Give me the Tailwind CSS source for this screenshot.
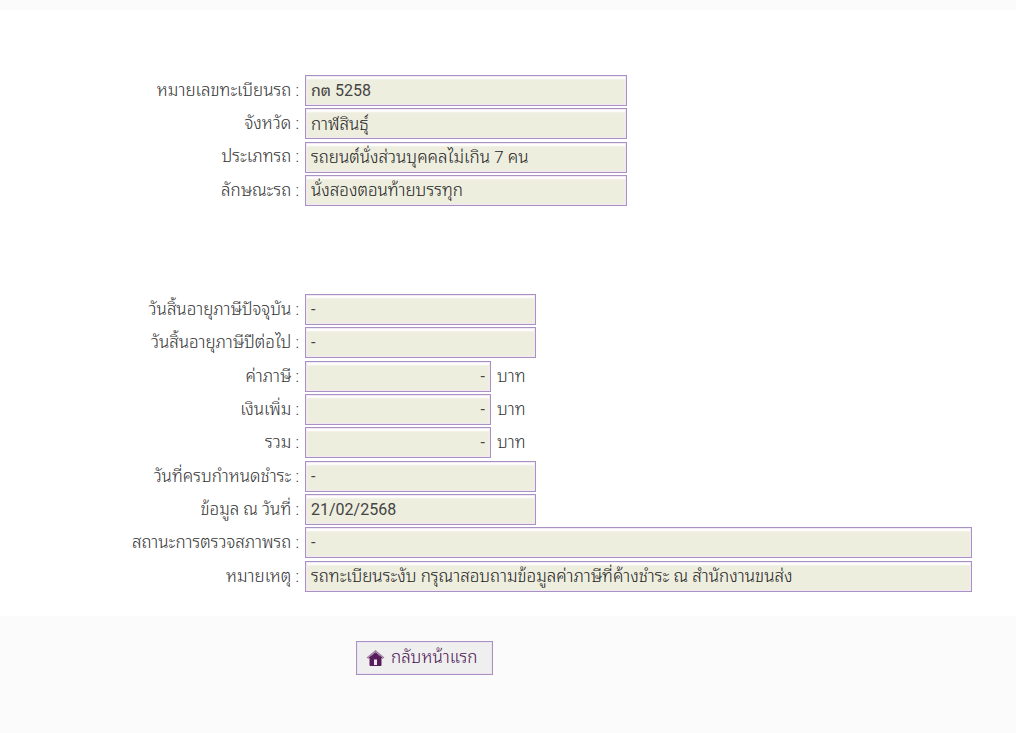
<!DOCTYPE html>
<html lang="th">
<head>
<meta charset="utf-8">
<meta name="viewport" content="width=device-width, initial-scale=1">
<title>ข้อมูลภาษีรถ</title>
<script src="https://cdn.jsdelivr.net/npm/@tailwindcss/browser@4"></script>
</head>
<body class="min-h-screen bg-[#fbfbfb] font-['Roboto','Noto_Sans_Thai_Looped','Noto_Sans',sans-serif] text-[17px] font-[350] text-[#333]">
<main class="pt-[10px]">
<form>
<div class="bg-white pt-[64px] pr-11 pb-[23px]">
  <section class="grid min-h-[133px] auto-rows-fr">
    <div class="flex items-center"><label for="plate" class="w-[305px] shrink-0 pr-[6px] text-right">หมายเลขทะเบียนรถ :</label><input id="plate" readonly value="กต 5258" class="h-[31px] w-[322px] border border-[#a991c4] bg-[#eeeedf] px-[5px] pb-[3px] text-base font-normal text-[#444] shadow-[inset_0_0_0_1px_#f2e9f2,inset_0_3px_2px_#fff]"></div>
    <div class="flex items-center"><label for="province" class="w-[305px] shrink-0 pr-[6px] text-right">จังหวัด :</label><input id="province" readonly value="กาฬสินธุ์" class="h-[31px] w-[322px] border border-[#a991c4] bg-[#eeeedf] px-[5px] pb-[3px] text-[#222] shadow-[inset_0_0_0_1px_#f2e9f2,inset_0_3px_2px_#fff]"></div>
    <div class="flex items-center"><label for="type" class="w-[305px] shrink-0 pr-[6px] text-right">ประเภทรถ :</label><input id="type" readonly value="รถยนต์นั่งส่วนบุคคลไม่เกิน 7 คน" class="h-[31px] w-[322px] border border-[#a991c4] bg-[#eeeedf] px-[5px] pb-[3px] text-[#222] shadow-[inset_0_0_0_1px_#f2e9f2,inset_0_3px_2px_#fff]"></div>
    <div class="flex items-center"><label for="body" class="w-[305px] shrink-0 pr-[6px] text-right">ลักษณะรถ :</label><input id="body" readonly value="นั่งสองตอนท้ายบรรทุก" class="h-[31px] w-[322px] border border-[#a991c4] bg-[#eeeedf] px-[5px] pb-[3px] text-[#222] shadow-[inset_0_0_0_1px_#f2e9f2,inset_0_3px_2px_#fff]"></div>
  </section>
  <section class="mt-[86px] grid min-h-[300px] auto-rows-fr">
    <div class="flex items-center"><label for="current" class="w-[305px] shrink-0 pr-[6px] text-right">วันสิ้นอายุภาษีปัจจุบัน :</label><input id="current" readonly value="-" class="h-[31px] w-[231px] border border-[#a991c4] bg-[#eeeedf] px-[5px] text-base font-normal text-[#444] shadow-[inset_0_0_0_1px_#f2e9f2,inset_0_3px_2px_#fff]"></div>
    <div class="flex items-center"><label for="next" class="w-[305px] shrink-0 pr-[6px] text-right">วันสิ้นอายุภาษีปีต่อไป :</label><input id="next" readonly value="-" class="h-[31px] w-[231px] border border-[#a991c4] bg-[#eeeedf] px-[5px] text-base font-normal text-[#444] shadow-[inset_0_0_0_1px_#f2e9f2,inset_0_3px_2px_#fff]"></div>
    <div class="flex items-center"><label for="tax" class="w-[305px] shrink-0 pr-[6px] text-right">ค่าภาษี :</label><input id="tax" readonly value="-" class="h-[31px] w-[186px] border border-[#a991c4] bg-[#eeeedf] px-[5px] text-right text-base font-normal text-[#444] shadow-[inset_0_0_0_1px_#f2e9f2,inset_0_3px_2px_#fff]"><span class="ml-[6px]">บาท</span></div>
    <div class="flex items-center"><label for="extra" class="w-[305px] shrink-0 pr-[6px] text-right">เงินเพิ่ม :</label><input id="extra" readonly value="-" class="h-[31px] w-[186px] border border-[#a991c4] bg-[#eeeedf] px-[5px] text-right text-base font-normal text-[#444] shadow-[inset_0_0_0_1px_#f2e9f2,inset_0_3px_2px_#fff]"><span class="ml-[6px]">บาท</span></div>
    <div class="flex items-center"><label for="total" class="w-[305px] shrink-0 pr-[6px] text-right">รวม :</label><input id="total" readonly value="-" class="h-[31px] w-[186px] border border-[#a991c4] bg-[#eeeedf] px-[5px] text-right text-base font-normal text-[#444] shadow-[inset_0_0_0_1px_#f2e9f2,inset_0_3px_2px_#fff]"><span class="ml-[6px]">บาท</span></div>
    <div class="flex items-center"><label for="due" class="w-[305px] shrink-0 pr-[6px] text-right">วันที่ครบกำหนดชำระ :</label><input id="due" readonly value="-" class="h-[31px] w-[231px] border border-[#a991c4] bg-[#eeeedf] px-[5px] text-base font-normal text-[#444] shadow-[inset_0_0_0_1px_#f2e9f2,inset_0_3px_2px_#fff]"></div>
    <div class="flex items-center"><label for="asof" class="w-[305px] shrink-0 pr-[6px] text-right">ข้อมูล ณ วันที่ :</label><input id="asof" readonly value="21/02/2568" class="h-[31px] w-[231px] border border-[#a991c4] bg-[#eeeedf] px-[5px] text-base font-normal text-[#444] shadow-[inset_0_0_0_1px_#f2e9f2,inset_0_3px_2px_#fff]"></div>
    <div class="flex items-center"><label for="inspect" class="w-[305px] shrink-0 pr-[6px] text-right">สถานะการตรวจสภาพรถ :</label><input id="inspect" readonly value="-" class="h-[31px] min-w-0 flex-1 border border-[#a991c4] bg-[#eeeedf] px-[5px] text-base font-normal text-[#444] shadow-[inset_0_0_0_1px_#f2e9f2,inset_0_3px_2px_#fff]"></div>
    <div class="flex items-center"><label for="note" class="w-[305px] shrink-0 pr-[6px] text-right">หมายเหตุ :</label><input id="note" readonly value="รถทะเบียนระงับ กรุณาสอบถามข้อมูลค่าภาษีที่ค้างชำระ ณ สำนักงานขนส่ง" class="h-[31px] min-w-0 flex-1 border border-[#a991c4] bg-[#eeeedf] px-[5px] pb-[3px] text-[#222] shadow-[inset_0_0_0_1px_#f2e9f2,inset_0_3px_2px_#fff]"></div>
  </section>
</div>
<div class="pt-[25px] pl-[356px]">
  <button type="button" class="flex h-[34px] items-center gap-[6px] border border-[#a991c4] bg-[#efefef] pr-[15px] pl-[9px] text-[#4a104e] shadow-[inset_0_0_0_1px_#ece5f0]">
    <svg class="h-[18px] w-[19px]" viewBox="0 0 19 18" aria-hidden="true">
      <path d="M3.5 8.5 9.5 4l6 4.5v7.6q0 .9-.9.9H4.4q-.9 0-.9-.9Z" fill="#581c5c"/>
      <path d="M1 9 9.5 2 18 9" fill="none" stroke="#a27fa5" stroke-width="1.5"/>
      <path d="M2.5 9.3 9.5 3.7l7 5.6" fill="none" stroke="#581c5c" stroke-width="1"/>
      <path d="M8 10.5h3V16H8Z" fill="#eee4ef"/>
    </svg>
    <span>กลับหน้าแรก</span>
  </button>
</div>
</form>
</main>
</body>
</html>
